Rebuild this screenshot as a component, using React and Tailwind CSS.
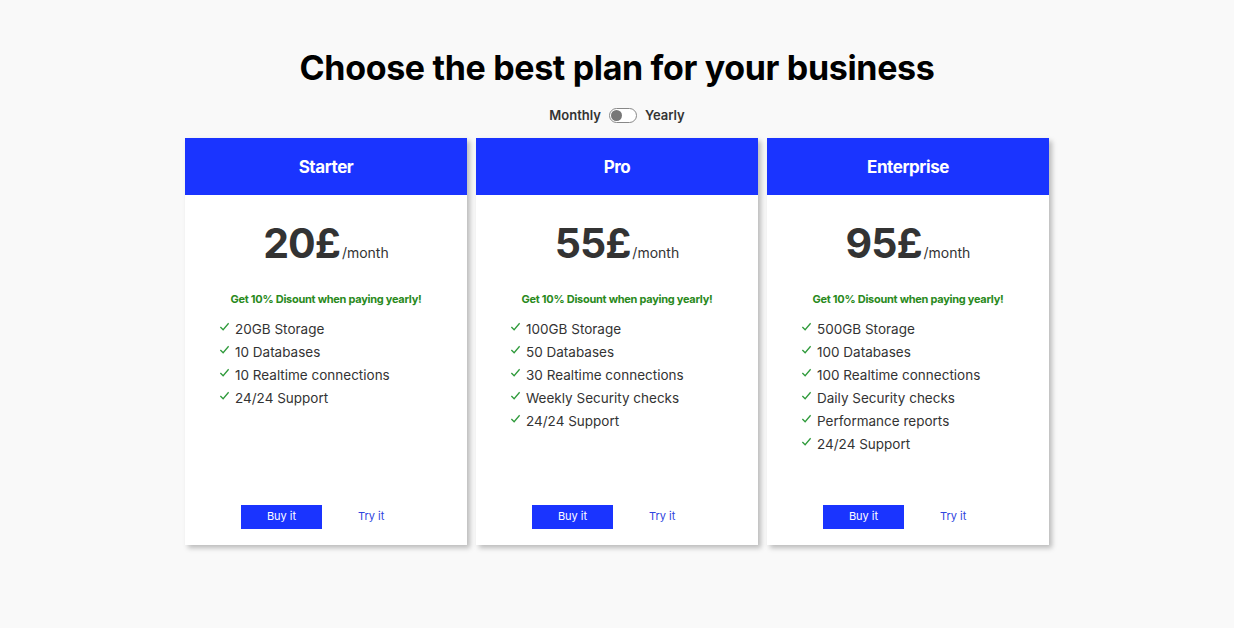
import React, { useState } from "react";

const plans = [
  {
    name: "Starter",
    price: "20£",
    features: ["20GB Storage", "10 Databases", "10 Realtime connections", "24/24 Support"],
  },
  {
    name: "Pro",
    price: "55£",
    features: [
      "100GB Storage",
      "50 Databases",
      "30 Realtime connections",
      "Weekly Security checks",
      "24/24 Support",
    ],
  },
  {
    name: "Enterprise",
    price: "95£",
    features: [
      "500GB Storage",
      "100 Databases",
      "100 Realtime connections",
      "Daily Security checks",
      "Performance reports",
      "24/24 Support",
    ],
  },
];

const Check = () => (
  <svg width="11" height="11" viewBox="0 0 12 12" fill="none" className="mt-[2px] shrink-0">
    <path d="M1.5 6.5 L4.5 9.5 L10.5 2.5" stroke="#2e9a3a" strokeWidth="1.4" />
  </svg>
);

const PlanCard = ({ plan }) => (
  <div className="w-[282px] h-[407px] bg-white flex flex-col shadow-[3px_3px_5px_rgba(0,0,0,0.25)]">
    <div className="h-[57px] bg-[#1a34ff] flex items-center justify-center pt-[4px]">
      <h2 className="text-white text-[17px] font-bold tracking-tight">{plan.name}</h2>
    </div>
    <div className="flex justify-center items-baseline mt-[22px] text-[#333]">
      <span className="text-[41px] font-bold leading-[52px] tracking-tight">{plan.price}</span>
      <span className="text-[14px] ml-[2px]">/month</span>
    </div>
    <p className="text-center text-[#2a8a1c] text-[11px] font-bold mt-[22px] tracking-tight">
      Get 10% Disount when paying yearly!
    </p>
    <ul className="mt-[12px] pl-[34px] flex flex-col">
      {plan.features.map((f) => (
        <li key={f} className="flex gap-[5px] h-[23px] text-[13.5px] text-[#333]">
          <Check />
          <span>{f}</span>
        </li>
      ))}
    </ul>
    <div className="mt-auto mb-[16px] flex items-center pl-[56px]">
      <button className="w-[81px] h-[24px] bg-[#1a34ff] text-white text-[11px]">Buy it</button>
      <button className="ml-[36px] text-[#2f45e0] text-[11px]">Try it</button>
    </div>
  </div>
);

const App = () => {
  const [yearly, setYearly] = useState(false);
  return (
    <div
      className="min-h-screen bg-[#f9f9f9] flex flex-col items-center pt-[46px]"
      style={{ fontFamily: "Inter, 'Noto Sans', sans-serif" }}
    >
      <h1 className="text-[34px] font-bold leading-[44px] text-black tracking-[-0.01em]">
        Choose the best plan for your business
      </h1>
      <div className="flex items-center gap-[8px] mt-[16px] text-[13px] font-semibold text-[#333]">
        <span>Monthly</span>
        <button
          onClick={() => setYearly(!yearly)}
          className="w-[28px] h-[15px] rounded-full border border-[#888] bg-white flex items-center px-[1px]"
        >
          <span className={`w-[11px] h-[11px] rounded-full bg-[#777] ${yearly ? "ml-auto" : ""}`} />
        </button>
        <span>Yearly</span>
      </div>
      <div className="flex gap-[9px] mt-[12px]">
        {plans.map((p) => (
          <PlanCard key={p.name} plan={p} />
        ))}
      </div>
    </div>
  );
};

export default App;
